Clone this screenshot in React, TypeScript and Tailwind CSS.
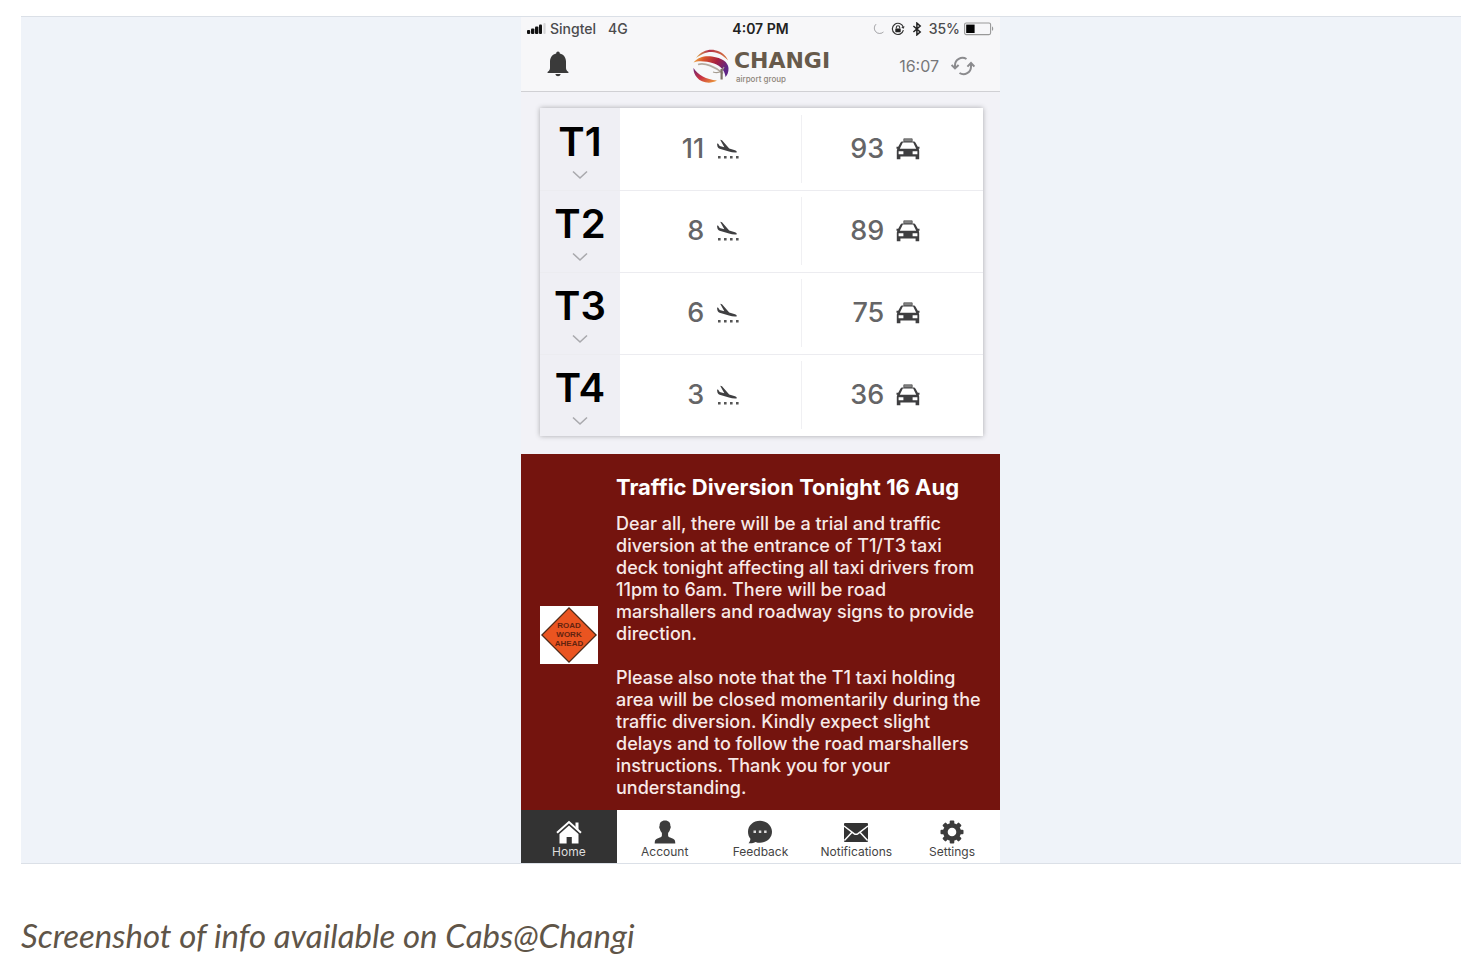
import type { ReactNode } from "react";

type IconProps = { className?: string };

const terminals = [
  { name: "T1", landings: 11, taxis: 93 },
  { name: "T2", landings: 8, taxis: 89 },
  { name: "T3", landings: 6, taxis: 75 },
  { name: "T4", landings: 3, taxis: 36 },
];

function SignalIcon() {
  return (
    <svg viewBox="0 0 19 12" className="h-3 w-[19px]" aria-hidden="true">
      <rect x="0" y="7" width="3.2" height="4" rx="1" fill="#111" />
      <rect x="4" y="5.500" width="3.4" height="5.500" rx="1" fill="#111" />
      <rect x="8" y="3.500" width="3.4" height="7.500" rx="1" fill="#111" />
      <rect x="12" y="1.500" width="3" height="9.500" rx="1" fill="#111" />
      <rect x="16.4" y="0" width="2.2" height="11" rx="1" fill="#d4d4d6" />
    </svg>
  );
}

function MoonIcon() {
  return (
    <svg viewBox="0 0 12 12" className="h-3 w-3" aria-hidden="true">
      <path d="M4 1.200A5.300 5.300 0 1 0 11.400 9A5 5 0 0 1 4 1.200z" fill="#929296" stroke="#929296" strokeWidth=".5" />
    </svg>
  );
}

function RotationLockIcon() {
  return (
    <svg viewBox="0 0 14 14" className="h-3.5 w-3.5" fill="none" stroke="#333" aria-hidden="true">
      <path d="M12.4 8.2A5.6 5.6 0 1 1 12.3 5.2" strokeWidth="1.2" />
      <path d="M13.6 4.2L12.6 6.8L10.2 5.4z" fill="#333" stroke="none" />
      <rect x="4.3" y="6.4" width="5.4" height="3.8" rx=".6" fill="#222" stroke="none" />
      <path d="M5.3 6.6V5.4a1.7 1.7 0 0 1 3.4 0v1.2" strokeWidth="1.1" />
    </svg>
  );
}

function BluetoothIcon() {
  return (
    <svg viewBox="0 0 10 14" className="h-3.5 w-2.5" aria-hidden="true">
      <path d="M1.4 4L8.2 10L4.9 12.9V1.1L8.2 4L1.4 10" fill="none" stroke="#222" strokeWidth="1.5" />
    </svg>
  );
}

function BatteryIcon() {
  return (
    <svg viewBox="0 0 30 14" className="h-3.5 w-[30px]" aria-hidden="true">
      <rect x=".6" y="1" width="26" height="11.6" rx="1.6" fill="none" stroke="#999" strokeWidth="1.1" />
      <rect x="2.2" y="2.6" width="8.4" height="8.4" fill="#050505" />
      <path d="M28 4.6c1.6.4 1.6 4 0 4.4z" fill="#999" />
    </svg>
  );
}

function BellIcon() {
  return (
    <svg viewBox="0 0 22 26" className="h-[26px] w-[22px]" aria-hidden="true">
      <path
        d="M11 .5c1.1 0 1.8.8 1.8 2c3.800.9 6.200 4 6.200 8v6.200c0 1.900.6 3 2.200 4.100c.8.6.5 1.200-.4 1.200H1.200c-.9 0-1.200-.6-.4-1.200c1.600-1.100 2.200-2.200 2.200-4.100v-6.200c0-4 2.400-7.100 6.200-8c0-1.200.7-2 1.800-2z"
        fill="#3a3a3a"
      />
      <path d="M8.400 23h5.200c-.3 1.500-1.300 2.200-2.600 2.200s-2.300-.7-2.600-2.200z" fill="#3a3a3a" />
    </svg>
  );
}

function ChangiMark() {
  return (
    <svg viewBox="0 0 38 36" className="h-9 w-[38px]" aria-hidden="true">
      <defs>
        <linearGradient id="ribbon" x1="0" y1="0" x2="1" y2="0.4">
          <stop offset="0" stopColor="#efc04a" />
          <stop offset=".3" stopColor="#d9542b" />
          <stop offset=".65" stopColor="#a8203f" />
          <stop offset="1" stopColor="#5f2585" />
        </linearGradient>
        <linearGradient id="base" x1="0" y1="0" x2="1" y2="1">
          <stop offset="0" stopColor="#6c2478" />
          <stop offset=".5" stopColor="#cb3340" />
          <stop offset="1" stopColor="#f0a63a" />
        </linearGradient>
        <linearGradient id="crest" x1="0" y1="0" x2="1" y2="0">
          <stop offset="0" stopColor="#dfa94b" />
          <stop offset=".4" stopColor="#b23049" />
          <stop offset="1" stopColor="#d8783d" />
        </linearGradient>
      </defs>
      <path d="M4 10C9 3 17 1 23 2.200C29 3.300 34 7 36 12.500C31 7 26 4.400 20 4C14 3.700 9 6.500 4 10z" fill="url(#crest)" />
      <path d="M1.500 14.500C6 9 13 7.500 20 8.500C30 10 36 14 36.500 20C36.700 24 35.500 27 33.500 29C33 23 29 18 22 15.500C14 13 6 12.500 1.500 14.500z" fill="url(#ribbon)" />
      <path d="M1.500 20C6 27 14 31.500 25 32.500C18 36.500 9 34.500 5 29.500C2.500 26.500 1.300 23 1.500 20z" fill="url(#base)" />
      <path d="M6 16.500C13 14.500 23 18.500 31 25.500" fill="none" stroke="#b4aaa0" strokeWidth="1.700" />
      <path d="M21 24C26 25.500 30 24 32 19" fill="none" stroke="#a59c91" strokeWidth="1.200" />
      <path d="M29.600 21V31.500" stroke="#7c7166" strokeWidth="2.200" />
    </svg>
  );
}

function RefreshIcon() {
  return (
    <svg viewBox="0 0 24 20" className="h-5 w-6" fill="none" stroke="#8b8b8e" strokeWidth="2" aria-hidden="true">
      <path d="M4 12V9.500A7.500 7.500 0 0 1 15.500 3" />
      <path d="M.6 9L4 12.400L7.600 9" />
      <path d="M20 7.500V10.500A7.500 7.500 0 0 1 8.500 17" />
      <path d="M16.400 10.600L20 7L23.400 10.600" />
    </svg>
  );
}

function ChevronIcon() {
  return (
    <svg viewBox="0 0 16 10" className="h-2.5 w-4" aria-hidden="true">
      <path d="M1 1.500L8 8L15 1.500" fill="none" stroke="#a9a9ad" strokeWidth="1.600" />
    </svg>
  );
}

function LandingIcon() {
  return (
    <svg viewBox="0 0 24 20" className="h-5 w-6" aria-hidden="true">
      <path
        d="M1 4.500L2.200 4.700L3.700 7L8.300 8.300L4.200 .8L6 1.200L13.200 9.600L19 11.200C20.600 11.700 21 12.500 20.600 13.400C18 13.700 15.500 13.200 13 12.500L3.600 9.700C2.200 9.200 1.500 8 1.300 6.700z"
        fill="#3f3f41"
      />
      <path d="M2 17h2.600v2.400H2zM8 17h2.600v2.400H8zM14 17h2.600v2.400H14zM20 17h2.600v2.400H20z" fill="#555" />
    </svg>
  );
}

function TaxiIcon() {
  return (
    <svg viewBox="0 0 24 22" className="h-[22px] w-6" aria-hidden="true">
      <path d="M7.800 .8h8.400v2.600H7.800z" fill="#888" stroke="#555" strokeWidth=".8" />
      <path
        d="M6.500 3.400h11c1 0 1.600.5 2.100 1.400l2.200 4H23.500v2h-.9c.5.8.6 1.500.6 2.500V21.200h-3.600V18.600H4.400V21.200H.8V13.300c0-1 .1-1.700.6-2.500H.5v-2H2.200l2.200-4c.5-.9 1.100-1.400 2.100-1.400z"
        fill="#3e3e40"
      />
      <path d="M6.800 4.600h10.400l3 6.200H3.800z" fill="#fff" />
      <path d="M2.600 13.300h4.800v3H2.600zM21.400 13.300h-4.800v3h4.800z" fill="#fff" />
    </svg>
  );
}

function RoadWorkSign() {
  return (
    <svg viewBox="0 0 58 58" className="h-[58px] w-[58px] bg-white" role="img" aria-label="Road work ahead">
      <path d="M29 1L57 29L29 57L1 29z" fill="#4d2a18" />
      <path d="M29 2.800L55.200 29L29 55.200L2.800 29z" fill="#ea5420" />
      <g fill="#62230f" fontFamily="Liberation Sans, sans-serif" fontWeight="700" fontSize="8" textAnchor="middle">
        <text x="29" y="22">ROAD</text>
        <text x="29" y="31">WORK</text>
        <text x="29" y="40">AHEAD</text>
      </g>
    </svg>
  );
}

function HomeIcon({ className }: IconProps) {
  return (
    <svg viewBox="0 0 26 24" className={className} aria-hidden="true">
      <path d="M1 12.800L13 2L25 12.800" fill="none" stroke="#fff" strokeWidth="2" />
      <path d="M19.500 2.500h3v7.500l-3-3z" fill="#fff" />
      <path d="M13 5.500L22.500 14V23.500H15.800V17H10.600V23.500H3.500V14z" fill="#fff" />
    </svg>
  );
}

function AccountIcon({ className }: IconProps) {
  return (
    <svg viewBox="0 0 26 24" className={className} aria-hidden="true">
      <path
        d="M13 .5c3.800 0 5.500 2.200 5.400 5.600c.6.3.5 2-.3 3c-.3 1.700-1.100 2.900-2 3.900v2.400c0 1 .8 1.700 2 2.200l3 1.100c1.600.7 2.200 2 2.200 4.800H2.700c0-2.800.6-4.100 2.200-4.800l3-1.100c1.200-.5 2-1.200 2-2.200V13c-.9-1-1.700-2.200-2-3.900c-.8-1-.9-2.700-.3-3C7.500 2.700 9.200.5 13 .5z"
        fill="#3c3c3c"
      />
    </svg>
  );
}

function FeedbackIcon({ className }: IconProps) {
  return (
    <svg viewBox="0 0 26 24" className={className} aria-hidden="true">
      <path d="M13 .8c6.800 0 12 4.800 12 10.900s-5.200 11-12 11c-1.700 0-3-.2-4.400-.8C6.800 23 4.300 23.500 1.500 23.200c1.300-1.500 1.900-2.900 1.900-4.500C1.900 16.900 1 14.500 1 11.700C1 5.600 6.200.8 13 .8z" fill="#3c3c3c" />
      <path d="M6.500 10.500H9V13H6.500zM11.800 10.500h2.500V13h-2.500zM17.100 10.500h2.500V13h-2.500z" fill="#ddd" />
    </svg>
  );
}

function MailIcon({ className }: IconProps) {
  return (
    <svg viewBox="0 0 26 24" className={className} aria-hidden="true">
      <rect x="1" y="3" width="24" height="19" rx="1" fill="#333" />
      <path d="M1 6L11 13.600c1.400 1 2.600 1 4 0L25 6M1.400 20.500L8.800 12.500M24.600 20.500L17.200 12.500" fill="none" stroke="#fff" strokeWidth="1.500" />
    </svg>
  );
}

function SettingsIcon({ className }: IconProps) {
  return (
    <svg viewBox="0 0 26 24" className={className} aria-hidden="true">
      <g fill="#3c3c3c">
        <circle cx="13" cy="12" r="9" />
        <rect x="10.700" y=".5" width="4.600" height="23" rx="1" />
        <rect x="10.700" y=".5" width="4.600" height="23" rx="1" transform="rotate(45 13 12)" />
        <rect x="10.700" y=".5" width="4.600" height="23" rx="1" transform="rotate(90 13 12)" />
        <rect x="10.700" y=".5" width="4.600" height="23" rx="1" transform="rotate(135 13 12)" />
      </g>
      <circle cx="13" cy="12" r="4.300" fill="#fff" />
    </svg>
  );
}

const tabs = [
  { label: "Home", Icon: HomeIcon, active: true },
  { label: "Account", Icon: AccountIcon, active: false },
  { label: "Feedback", Icon: FeedbackIcon, active: false },
  { label: "Notifications", Icon: MailIcon, active: false },
  { label: "Settings", Icon: SettingsIcon, active: false },
];

function StatusBar() {
  return (
    <div className="grid grid-cols-3 items-center px-1.5 text-[14px] leading-6 font-medium text-[#4b4b4d]">
      <div className="flex items-center">
        <SignalIcon />
        <span className="ml-1">Singtel</span>
        <span className="ml-3">4G</span>
      </div>
      <div className="text-center font-semibold text-[#222]">4:07 PM</div>
      <div className="flex items-center justify-end gap-[7px]">
        <MoonIcon />
        <RotationLockIcon />
        <BluetoothIcon />
        <span className="flex items-center gap-1">
          35%
          <BatteryIcon />
        </span>
      </div>
    </div>
  );
}

function AppBar() {
  return (
    <header className="grid h-[50px] grid-cols-[1fr_auto_1fr] items-center pr-[25px] pl-[26px]">
      <button type="button" aria-label="Alerts" className="justify-self-start pb-1">
        <BellIcon />
      </button>
      <div className="flex items-center gap-1">
        <ChangiMark />
        <div className="text-[#675a4b]">
          <div className="font-['DejaVu_Sans'] text-[22px] leading-[26px] font-bold">CHANGI</div>
          <div className="pl-0.5 text-[8px] leading-[10px] font-medium text-[#8d8479]">airport group</div>
        </div>
      </div>
      <div className="flex items-center gap-3 justify-self-end text-[16px] text-[#77777a]">
        16:07
        <button type="button" aria-label="Refresh">
          <RefreshIcon />
        </button>
      </div>
    </header>
  );
}

function Figure({ value, children }: { value: number; children: ReactNode }) {
  return (
    <div className="flex items-center justify-center gap-3">
      <span className="w-10 text-right">{value}</span>
      {children}
    </div>
  );
}

function TerminalTable() {
  return (
    <div className="bg-[#f2f2f7] pt-4 pr-[17px] pb-[18px] pl-[19px]">
      <table className="w-full table-fixed border-collapse bg-white text-[27px] font-medium text-[#656567] shadow-[0_0_5px_rgba(0,0,0,0.3)]">
        <tbody>
          {terminals.map((t) => (
            <tr key={t.name} className="h-[82px] border-b border-[#ececf0] last:border-b-0">
              <th scope="row" className="w-20 bg-[#efeff4] p-0">
                <button type="button" className="flex w-full flex-col items-center gap-1">
                  <span className="text-[40px] leading-12 font-semibold text-black">{t.name}</span>
                  <ChevronIcon />
                </button>
              </th>
              <td className="py-1.5 pr-0 pl-0">
                <div className="flex h-[68px] items-center justify-center border-r border-[#f0f0f3] pr-4">
                  <Figure value={t.landings}>
                    <LandingIcon />
                  </Figure>
                </div>
              </td>
              <td className="p-0 pr-5">
                <Figure value={t.taxis}>
                  <TaxiIcon />
                </Figure>
              </td>
            </tr>
          ))}
        </tbody>
      </table>
    </div>
  );
}

function Alert() {
  return (
    <section className="flex items-center gap-[18px] bg-[#74140e] pr-4 pl-[19px] text-[#f7e9e7]">
      <div className="shrink-0 pt-1.5">
        <RoadWorkSign />
      </div>
      <div className="pt-[17px] pb-[11px]">
        <h1 className="pb-2.5 text-[22px] leading-8 font-bold whitespace-nowrap text-white">Traffic Diversion Tonight 16 Aug</h1>
        <p className="text-[18px] leading-[22px] font-medium whitespace-nowrap">
          Dear all, there will be a trial and traffic
          <br />
          diversion at the entrance of T1/T3 taxi
          <br />
          deck tonight affecting all taxi drivers from
          <br />
          11pm to 6am. There will be road
          <br />
          marshallers and roadway signs to provide
          <br />
          direction.
        </p>
        <p className="pt-[22px] text-[18px] leading-[22px] font-medium whitespace-nowrap">
          Please also note that the T1 taxi holding
          <br />
          area will be closed momentarily during the
          <br />
          traffic diversion. Kindly expect slight
          <br />
          delays and to follow the road marshallers
          <br />
          instructions. Thank you for your
          <br />
          understanding.
        </p>
      </div>
    </section>
  );
}

function TabBar() {
  return (
    <nav className="grid grid-cols-5 bg-white">
      {tabs.map(({ label, Icon, active }) => (
        <button
          key={label}
          type="button"
          className={
            active
              ? "flex flex-col items-center bg-[#333] pt-2.5 pb-[3px] text-[12px] leading-4 text-[#ddd]"
              : "flex flex-col items-center pt-2.5 pb-[3px] text-[12px] leading-4 text-[#444]"
          }
        >
          <Icon className="h-6 w-[26px]" />
          {label}
        </button>
      ))}
    </nav>
  );
}

export default function App() {
  return (
    <main className="min-h-screen bg-white pt-4 pr-[23px] pb-2 pl-[21px] font-['Inter',sans-serif]">
      <figure>
        <div className="flex justify-center border-y border-[#dbe0e7] bg-[#eff3f9] pl-[39px]">
          <div className="w-[479px] max-w-full bg-[#f7f7f9]">
            <div className="border-b border-[#d0d0d4]">
              <StatusBar />
              <AppBar />
            </div>
            <TerminalTable />
            <Alert />
            <TabBar />
          </div>
        </div>
        <figcaption className="pt-[49px] font-['Lato',sans-serif] text-[33px] leading-[44px] text-[#5f5548] italic">
          Screenshot of info available on Cabs@Changi
        </figcaption>
      </figure>
    </main>
  );
}
